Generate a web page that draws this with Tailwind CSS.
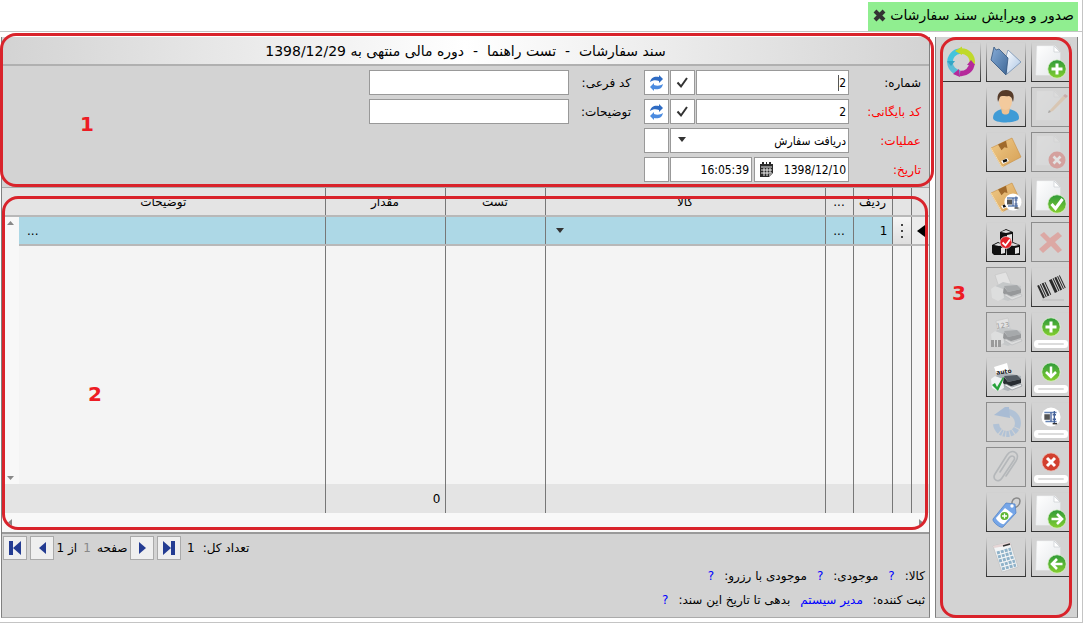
<!DOCTYPE html>
<html lang="fa" dir="rtl">
<head>
<meta charset="utf-8">
<title>صدور و ویرایش سند سفارشات</title>
<script src="https://cdn.jsdelivr.net/npm/@tailwindcss/browser@4"></script>
</head>
<body class="flex min-h-screen flex-col border-b border-l-0 border-r border-[#c4c4c4] bg-white text-xs text-black font-['DejaVu_Sans',sans-serif]">
<svg width="0" height="0" class="absolute size-0" aria-hidden="true">
  <defs>
    <linearGradient id="g-green" x1="0" y1="0" x2="0" y2="1"><stop offset="0" stop-color="#2f9a3a"/><stop offset="1" stop-color="#85cf2f"/></linearGradient>
    <linearGradient id="g-doc" x1="0" y1="0" x2="1" y2="1"><stop offset="0" stop-color="#fff"/><stop offset="1" stop-color="#e4e7ea"/></linearGradient>
    <linearGradient id="g-blue" x1="0" y1="0" x2="1" y2="1"><stop offset="0" stop-color="#86acd8"/><stop offset="1" stop-color="#3e6796"/></linearGradient>
    <linearGradient id="g-pale" x1="0" y1="0" x2="1" y2="1"><stop offset="0" stop-color="#fff"/><stop offset="1" stop-color="#a9c4e4"/></linearGradient>
    <linearGradient id="g-box" x1="0" y1="0" x2="1" y2="1"><stop offset="0" stop-color="#efc987"/><stop offset="1" stop-color="#d6a055"/></linearGradient>
    <symbol id="doc" viewBox="0 0 38 38"><path d="M5 3h18l5 6v23H4z" fill="url(#g-doc)" stroke="#eef0f2" stroke-width=".6"/><path d="M22 3v6h6z" fill="#fff" stroke="#c9cdd1" stroke-width=".7"/></symbol>
    <symbol id="dot" viewBox="0 0 18 18"><circle cx="9" cy="9" r="8.300" fill="url(#g-green)" stroke="#dff2cf" stroke-width=".7"/></symbol>
    <symbol id="bar" viewBox="0 0 38 38"><rect x="2" y="27" width="34" height="8" rx="3.500" fill="#fff"/><rect x="6" y="30" width="26" height="2" rx="1" fill="#dcdcdc"/></symbol>
    <symbol id="clamp" viewBox="0 0 18 18"><circle cx="9" cy="9" r="8.600" fill="#fff"/><path d="M3 5h11M4 13h10" stroke="#6482b4" stroke-width="1.300"/><path d="M3 6.500h5v5H3z" fill="#555"/><path d="M9 5v8M12 3.500v11M10.500 7h3M10.500 11h3" stroke="#45629a" stroke-width="1.200"/><path d="M10.500 15h4" stroke="#333" stroke-width="1.300"/></symbol>
    <symbol id="box" viewBox="0 0 38 38"><path d="M4 15 25 5l9 19-19 10z" fill="url(#g-box)" stroke="#c98e3f" stroke-width=".6"/><path d="m11 11.500 8-3.800 1.500 7.300-3-.8-3 3z" fill="#a06a2c"/><path d="M4 15 15 34l1.500-1" fill="none" stroke="#f8dca8"/><path d="m14 28 6-3 2 3-6 3z" fill="#fff"/><path d="m16 28.500 4-1.500" stroke="#111" stroke-width="2.500"/></symbol>
    <symbol id="printer" viewBox="0 0 38 38"><path d="M7 19 16 14l18 4v9l-13 6-13-4z" fill="#aeb4b9"/><path d="m4 21 4-3 8 3 1 9-6 3-6-3z" fill="#f1f3f4"/><path d="m17 18 13-1 4 4-13 3z" fill="#545c64"/><path d="m17 19 4 5 13-3v4l-13 4-5-4z" fill="#272c31"/><path d="m17 27 8 5 10-4-1-2-9 3-6-3z" fill="#eef0f1" stroke="#909599" stroke-width=".7"/></symbol>
  </defs>
</svg>

<header class="flex h-8 shrink-0 items-end border-b border-[#c4c4c4] pr-1">
  <div class="flex h-[29px] items-start gap-1 bg-[#90ee90] pt-[3px] pr-1 pl-[5px] text-[14px] leading-5">
    <span class="whitespace-nowrap">صدور و ویرایش سند سفارشات</span>
    <button type="button" aria-label="بستن" class="pt-1"><svg width="13" height="13" viewBox="0 0 13 13"><path d="m2 2 9 9M11 2l-9 9" stroke="#333" stroke-width="4"/></svg></button>
  </div>
</header>

<div class="flex flex-1 gap-[5px] pt-[5px] pr-1 pb-1 pl-px">
  <!-- Toolbar -->
  <aside class="relative w-[143px] shrink-0 border-x border-b border-x-[#808080] border-b-[#aaa] bg-[#d3d3d3]">
    <div class="grid grid-flow-col grid-cols-[repeat(3,40px)] grid-rows-[repeat(12,40px)] gap-[5px] pt-[5px] pr-[6px]
      [&>button]:border [&>button]:[border-image:linear-gradient(#d3d3d3,#333)_1] [&>button:disabled]:[border-image:linear-gradient(#8c8c8c,#8c8c8c)_1] [&>button:disabled>svg]:opacity-35">
      <button type="button" aria-label="سند جدید"><svg viewBox="0 0 38 38"><use href="#doc"/><use href="#dot" x="15" y="16" width="20" height="20"/><path d="M25 20.500v11M19.500 26h11" stroke="#fff" stroke-width="3"/></svg></button>
      <button type="button" disabled aria-label="ویرایش"><svg viewBox="0 0 38 38"><use href="#doc" opacity=".6"/><path d="m18 22 13-14 3 2-13 13-5 2z" fill="#e4b07a"/><path d="m31 8 2-2 3 2-2 2z" fill="#b7655f"/><path d="m16 25 1-3 2 2z" fill="#555"/></svg></button>
      <button type="button" disabled aria-label="انصراف"><svg viewBox="0 0 38 38"><use href="#doc" opacity=".6"/><circle cx="25" cy="27" r="8.500" fill="#d8473f"/><path d="m21.500 23.500 7 7m0-7-7 7" stroke="#fff" stroke-width="2.600"/></svg></button>
      <button type="button" aria-label="تایید"><svg viewBox="0 0 38 38"><use href="#doc"/><use href="#dot" x="15" y="16" width="20" height="20"/><path d="m19.500 26 4 4.500 7-9.500" fill="none" stroke="#fff" stroke-width="3"/></svg></button>
      <button type="button" disabled aria-label="حذف"><svg viewBox="0 0 38 38"><path d="m8 12 4-3 6 6 8-6 4 4-7 6 7 8-4 3-7-7-8 7-4-4 8-7z" fill="#ef5a4f"/></svg></button>
      <button type="button" aria-label="بارکد"><svg viewBox="0 0 38 38"><g transform="rotate(-25 19 19)" fill="#2a2a2a"><path d="M7 12h2v14H7zM10 12h1v14h-1zM12 12h2v14h-2zM15 12h1v14h-1zM20 12h3v14h-3zM24 12h1v14h-1zM26 12h2v14h-2zM29 12h1v14h-1zM31 12h1v14h-1z"/></g><path d="M10 32h22" stroke="#bbb"/></svg></button>
      <button type="button" aria-label="ردیف جدید"><svg viewBox="0 0 38 38"><use href="#bar"/><use href="#dot" x="9" y="4" width="20" height="20"/><path d="M19 8.500v11M13.500 14h11" stroke="#fff" stroke-width="3"/></svg></button>
      <button type="button" aria-label="درج ردیف"><svg viewBox="0 0 38 38"><use href="#bar"/><use href="#dot" x="9" y="4" width="20" height="20"/><path d="M19 8.500v10m-5-4.500 5 5 5-5" fill="none" stroke="#fff" stroke-width="2.500"/></svg></button>
      <button type="button" aria-label="فشرده سازی ردیف"><svg viewBox="0 0 38 38"><use href="#bar"/><use href="#clamp" x="9" y="4" width="20" height="20"/></svg></button>
      <button type="button" aria-label="حذف ردیف"><svg viewBox="0 0 38 38"><use href="#bar"/><circle cx="19" cy="14" r="9" fill="#d2402f" stroke="#efb3a9" stroke-width=".7"/><path d="m15 10 8 8m0-8-8 8" stroke="#fff" stroke-width="3"/></svg></button>
      <button type="button" aria-label="سند بعدی"><svg viewBox="0 0 38 38"><use href="#doc"/><use href="#dot" x="15" y="16" width="20" height="20"/><path d="M19.500 26H30m-5-5 5 5-5 5" fill="none" stroke="#fff" stroke-width="2.600"/></svg></button>
      <button type="button" aria-label="سند قبلی"><svg viewBox="0 0 38 38"><use href="#doc"/><use href="#dot" x="15" y="16" width="20" height="20"/><path d="M30.500 26H20m5-5-5 5 5 5" fill="none" stroke="#fff" stroke-width="2.600"/></svg></button>

      <button type="button" aria-label="باز کردن"><svg viewBox="0 0 38 38"><path d="m18 17 3-10 13 12-14 12z" fill="url(#g-pale)" stroke="#6888ae" stroke-width=".7"/><path d="m7 4 2 3 3-1 9 9-2 17L4 17z" fill="url(#g-blue)" stroke="#35567e" stroke-width=".8"/></svg></button>
      <button type="button" aria-label="کاربر"><svg viewBox="0 0 38 38"><path d="M6 30c0-6 5-8 9-9h7c5 1 10 3 10 9 0 6-26 6-26 0z" fill="#3f9bd6"/><path d="M14 20h9l-1 5c-2 2-5 2-7 0z" fill="#efc191"/><ellipse cx="18.500" cy="13.500" rx="6.500" ry="8.500" fill="#f3ca9d"/><path d="M11 14C9 5 14 2 19 2c7 0 9 5 7 12-1-3-1-5-4-6-4 1-7-1-9 1z" fill="#563b29"/></svg></button>
      <button type="button" aria-label="کالا"><svg viewBox="0 0 38 38"><use href="#box"/></svg></button>
      <button type="button" aria-label="کالا فشرده"><svg viewBox="0 0 38 38"><use href="#box"/><use href="#clamp" x="17" y="15" width="18" height="18"/></svg></button>
      <button type="button" aria-label="موجودی انبار"><svg viewBox="0 0 38 38"><path d="m13 9 6-3 7 3v14H13zM5 22l6-3 8 3v10H7l-2-2zM19 22l7-3 7 3v10H20z" fill="#111"/><path d="m14 9 5-2 5 2-5 1zM7 22l4-2 6 2-5 1zM21 22l5-2 6 2-5 1z" fill="#ddd"/><path d="m20 12 5-1v8l-5 1zM14 25l4-1v6l-4 1zM28 25l4-1v6l-4 1z" fill="#e5e5e5"/><circle cx="19" cy="19.500" r="6" fill="#e32228" stroke="#fff" stroke-width=".6"/><path d="m15.500 19.500 3 3 4.500-6" fill="none" stroke="#fff" stroke-width="1.800"/></svg></button>
      <button type="button" disabled aria-label="چاپ"><svg viewBox="0 0 38 38"><path d="m8 7 11-3 5 12-12 3z" fill="#fff" stroke="#aaa" stroke-width=".6"/><use href="#printer"/></svg></button>
      <button type="button" disabled aria-label="چاپ شماره"><svg viewBox="0 0 38 38"><path d="m9 8 12-3 2 11-12 3z" fill="#fff" stroke="#aaa" stroke-width=".6"/><use href="#printer"/><text x="9" y="15" font-size="7" transform="rotate(-8 15 12)" direction="ltr" fill="#333">123</text><path d="M4 27h3v7H4zM8 27h2v7H8zM11 27h3v7h-3z" fill="#333"/></svg></button>
      <button type="button" aria-label="چاپ خودکار"><svg viewBox="0 0 38 38"><path d="m7 9 13-4 3 12-12 3z" fill="#fff"/><use href="#printer"/><text x="9" y="16" font-size="6" font-weight="bold" transform="rotate(-8 15 12)" direction="ltr" fill="#222">auto</text><path d="m5 27 3-2 2 4 6-10 1 1-6 13z" fill="#27a33b"/></svg></button>
      <button type="button" disabled aria-label="بازگشت"><svg viewBox="0 0 38 38"><path d="M21 9a11 11 0 1 1-12 12" fill="none" stroke="#74a5dc" stroke-width="6" stroke-dasharray="21 1 4 1 3 1 3 1 2 1 2 1"/><path d="M7 12 18 4h4l1 11z" fill="#5c94d6"/></svg></button>
      <button type="button" disabled aria-label="پیوست"><svg viewBox="0 0 38 38"><path d="m13 24 9-14c3-4 7-1 5 2L15 30c-4 6-10 1-7-4L20 7c5-7 14-2 9 6L19 28" fill="none" stroke="#7d858c" stroke-width="1.600" stroke-linecap="round"/></svg></button>
      <button type="button" aria-label="برچسب"><svg viewBox="0 0 38 38"><path d="M25 12c-1-8 8-9 8-4s-4 7-7 6" fill="none" stroke="#888" stroke-width="1.500"/><path d="m6 26 13-16 9 1 1 9-13 14c-2 2-11-5-10-8z" fill="#76a6e8" stroke="#4d7fc4" stroke-width=".7"/><path d="m9 25 9-10 8 6-9 10c-2 1-8-4-8-6z" fill="#fff"/><circle cx="25" cy="13" r="1.700" fill="#fff"/><circle cx="17.500" cy="23" r="4" fill="#5cb531"/><path d="M17.500 20.500v5M15 23h5" stroke="#fff" stroke-width="1.300"/></svg></button>
      <button type="button" aria-label="ماشین حساب"><svg viewBox="0 0 38 38"><path d="m6 8 17-4 8 25-16 5z" fill="#f3f5f6" stroke="#bbb" stroke-width=".6"/><path d="m6 8 17-4 1 3L7 10z" fill="#e6d6d6"/><path d="m16 8 7-2" stroke="#333" stroke-width="1.500"/><g fill="none" stroke="#8fb2c9" stroke-width="3" stroke-dasharray="3 1"><path d="m10 15 14-4"/><path d="m11 19 14-4"/><path d="m12 23 15-4"/><path d="m14 27 14-4"/><path d="m15 31 14-4"/></g></svg></button>

      <button type="button" aria-label="بازخوانی"><svg viewBox="0 0 38 38" fill="none" stroke-width="5.500"><path d="M18.500 8A11 11 0 0 0 8 20" stroke="#43c3dd"/><path d="M8 19a11 11 0 0 0 10 11" stroke="#5cbcd6"/><path d="M18 30.500a11 11 0 0 0 12-10" stroke="#b5299b"/><path d="M30 21A11 11 0 0 0 18 8" stroke="#c0d92b"/><path d="M20 3.500l-7 4.500 7 4z" fill="#c0d92b" stroke="none"/><path d="M5 18h8l-4 5z" fill="#35a5c4" stroke="none"/><path d="m17 26-6 5 7 3zM25 22h8l-4-5z" fill="#b5299b" stroke="none"/></svg></button>
    </div>
    <div class="pointer-events-none absolute top-0 -bottom-px left-1 right-[5px] rounded-[16px] border-[3px] border-[#d9232b]"></div>
    <span class="absolute top-[242px] left-4 text-xl font-bold text-[#ed1c24]">3</span>
  </aside>

  <main class="flex min-w-0 flex-1 flex-col border-x border-b border-x-[#808080] border-b-[#aaa] bg-[#d3d3d3]">
    <!-- Document header -->
    <section class="relative h-[151px] border-b border-[#aaa]">
      <h1 class="h-[29px] border-b-2 border-[#b0b0b0] bg-linear-to-r from-[#d3d3d3] via-white to-[#d3d3d3] text-center text-[14px] leading-7 whitespace-pre">سند سفارشات  -  تست راهنما  -  دوره مالی منتهی به 1398/12/29</h1>
      <form class="flex pt-1 pr-2
        [&_input]:h-[25px] [&_input]:border [&_input]:border-[#999] [&_input]:bg-white [&_input]:px-[2px] [&_input]:text-right [&_input]:font-['DejaVu_Sans_Condensed'] [&_input]:[direction:ltr]
        [&_button]:flex [&_button]:size-[25px] [&_button]:items-center [&_button]:justify-center [&_button]:border [&_button]:border-[#999] [&_button]:bg-white">
        <div class="grid grid-cols-[71px_153px_25px_25px] content-start items-center gap-y-1 gap-x-px">
          <label for="num">شماره:</label>
          <div class="relative"><input id="num" value="2" class="w-full"><span class="absolute top-[5px] right-[10px] h-4 w-px bg-[#555]"></span></div>
          <button type="button" aria-label="تایید شماره"><svg width="15" height="15" viewBox="0 0 15 15"><path d="m2.500 7.500 3.500 4L12 3" fill="none" stroke="#333" stroke-width="2"/></svg></button>
          <button type="button" aria-label="تازه سازی شماره"><svg width="17" height="18" viewBox="0 0 17 18"><path d="M2 8c1-5 5-6 9-5V1l4 4-4 4V7C8 6 5 6 2 8z" fill="#2f6cc4"/><path d="M15 10c-1 5-5 6-9 5v2l-4-4 4-4v2c3 1 6 1 9-1z" fill="#4b8be0"/></svg></button>
          <label for="arc" class="whitespace-nowrap text-[#ff0000]">کد بایگانی:</label>
          <input id="arc" value="2" class="w-full">
          <button type="button" aria-label="تایید کد"><svg width="15" height="15" viewBox="0 0 15 15"><path d="m2.500 7.500 3.500 4L12 3" fill="none" stroke="#333" stroke-width="2"/></svg></button>
          <button type="button" aria-label="تازه سازی کد"><svg width="17" height="18" viewBox="0 0 17 18"><path d="M2 8c1-5 5-6 9-5V1l4 4-4 4V7C8 6 5 6 2 8z" fill="#2f6cc4"/><path d="M15 10c-1 5-5 6-9 5v2l-4-4 4-4v2c3 1 6 1 9-1z" fill="#4b8be0"/></svg></button>
          <label for="op" class="text-[#ff0000]">عملیات:</label>
          <div class="relative col-span-2">
            <select id="op" class="block h-[25px] w-full appearance-none border border-[#999] bg-white px-[2px] font-['DejaVu_Sans_Condensed']"><option>دریافت سفارش</option></select>
            <svg class="pointer-events-none absolute top-[9px] left-2" width="8" height="5" viewBox="0 0 8 5"><path d="M0 0h8L4 5z" fill="#333"/></svg>
          </div>
          <button type="button" aria-label="عملیات"></button>
          <label for="date" class="text-[#ff0000]">تاریخ:</label>
          <div class="col-span-2 flex gap-[2px]">
            <div class="flex h-[25px] w-[95px] items-center border border-[#999] bg-white">
              <input id="date" value="1398/12/10" class="w-[74px] border-0! h-[23px]!">
              <svg width="15" height="16" viewBox="0 0 15 16"><path d="M1 2h13v9l-4 4H1z" fill="#2b2b2b"/><path d="M3 0h2v3H3zM7 0h1v3H7zM10 0h2v3h-2z" fill="#2b2b2b"/><path d="M2 5h11M5 6v8M8 6v8M11 6v5M2 8h11M2 11h11" stroke="#fff" stroke-width=".9"/><path d="m10 15 4-4h-4z" fill="#999"/></svg>
            </div>
            <input aria-label="ساعت" value="16:05:39" class="min-w-0 flex-1">
          </div>
          <button type="button" aria-label="تاریخ"></button>
        </div>
        <div class="mr-[13px] grid grid-cols-[62px_200px] content-start items-center gap-y-1">
          <label for="sub">کد فرعی:</label><input id="sub" class="w-full">
          <label for="desc">توضیحات:</label><input id="desc" class="w-full">
        </div>
      </form>
      <div class="pointer-events-none absolute -top-1 -right-[5px] bottom-0 -left-[2px] rounded-[16px] border-[3px] border-[#d9232b]"></div>
      <span class="absolute top-[73px] left-[78px] text-xl font-bold text-[#ed1c24]">1</span>
    </section>

    <!-- Lines grid -->
    <section class="relative border-b-2 border-[#999] bg-[#f8f8f8]">
      <table class="w-full table-fixed border-collapse bg-[#f4f4f4] [&_td]:p-0 [&_th]:p-0 [&_th]:font-normal">
        <colgroup><col class="w-[18px]"><col class="w-[19px]"><col class="w-[39px]"><col class="w-[28px]"><col class="w-[280px]"><col class="w-[100px]"><col class="w-[120px]"><col><col class="w-[17px]"></colgroup>
        <thead>
          <tr class="h-7 border-b-2 border-[#b8b8b8] bg-[#e4e4e4] leading-6 [&>th]:border-l [&>th]:border-l-[#777] [&>th:last-child]:border-l-0">
            <th></th><th></th><th>ردیف</th><th>...</th><th>کالا</th><th>تست</th><th>مقدار</th><th colspan="2">توضیحات</th>
          </tr>
        </thead>
        <tbody>
          <tr class="h-[29px] border-b-2 border-[#b8b8b8] bg-[#add8e6] [&>td]:border-l [&>td]:border-l-[#777] [&>td:nth-last-child(-n+2)]:border-l-0">
            <td class="bg-[#ececec]"><svg class="mr-1" width="9" height="12" viewBox="0 0 9 12"><path d="M9 0v12L1 6z"/></svg></td>
            <td class="bg-linear-to-b from-[#f5f5f5] to-[#dedede] text-center"><button type="button" aria-label="منوی ردیف" class="align-middle"><svg width="4" height="14" viewBox="0 0 4 14"><path d="M1 0h2v2H1zM1 6h2v2H1zM1 12h2v2H1z" fill="#444"/></svg></button></td>
            <td class="pr-1!">1</td>
            <td class="text-center">...</td>
            <td><svg class="mr-auto ml-[10px]" width="8" height="5" viewBox="0 0 8 5"><path d="M0 0h8L4 5z" fill="#333"/></svg></td>
            <td></td><td></td>
            <td class="pl-2! text-left">...</td>
            <td rowspan="2" class="border-b-0 bg-[#f8f8f8]">
              <div class="flex h-[267px] flex-col items-center justify-between py-1">
                <svg width="7" height="4" viewBox="0 0 7 4"><path d="M0 4h7L3.500 0z" fill="#888"/></svg>
                <svg width="7" height="4" viewBox="0 0 7 4"><path d="M0 0h7L3.500 4z" fill="#888"/></svg>
              </div>
            </td>
          </tr>
          <tr class="[&>td]:border-l [&>td]:border-l-[#777] [&>td:last-child]:border-l-0">
            <td></td><td></td><td></td><td></td><td></td><td></td><td></td><td></td>
          </tr>
        </tbody>
        <tfoot>
          <tr class="h-[29px] bg-[#e4e4e4] [&>td]:border-l [&>td]:border-l-[#777] [&>td:last-child]:border-l-0">
            <td></td><td></td><td></td><td></td><td></td><td></td><td class="pr-1!">0</td><td colspan="2"></td>
          </tr>
        </tfoot>
      </table>
      <div class="flex h-[19px] items-center justify-between px-[6px]">
        <svg width="4" height="7" viewBox="0 0 4 7"><path d="M0 0v7l4-3.500z" fill="#888"/></svg>
        <svg width="4" height="7" viewBox="0 0 4 7"><path d="M4 0v7L0 3.500z" fill="#888"/></svg>
      </div>
      <div class="pointer-events-none absolute top-2 right-px bottom-[2px] left-0 rounded-[16px] border-[3px] border-[#d9232b]"></div>
      <span class="absolute top-[192px] left-[86px] text-xl font-bold text-[#ed1c24]">2</span>
    </section>

    <!-- Pager and status -->
    <footer class="pt-[2px]">
      <nav dir="ltr" class="flex items-center pl-px [&_button]:flex [&_button]:size-6 [&_button]:items-center [&_button]:justify-center [&_button]:border [&_button]:border-[#aaa] [&_button]:bg-[#efefef]">
        <div class="flex gap-[3px]">
          <button type="button" aria-label="اولین صفحه"><svg width="12" height="14" viewBox="0 0 12 14"><path d="M0 0h4v14H0zM12 0v14L4 7z" fill="#243c92"/></svg></button>
          <button type="button" aria-label="صفحه پیش"><svg width="7" height="12" viewBox="0 0 7 12"><path d="M7 0v12L0 6z" fill="#243c92"/></svg></button>
        </div>
        <div dir="rtl" class="flex w-[76px] items-center justify-center gap-[2px] whitespace-nowrap"><label for="page">صفحه</label><input id="page" value="1" class="w-4 text-center text-[#888]"><span>از 1</span></div>
        <div class="flex gap-[3px]">
          <button type="button" aria-label="صفحه بعد"><svg width="7" height="12" viewBox="0 0 7 12"><path d="M0 0v12l7-6z" fill="#243c92"/></svg></button>
          <button type="button" aria-label="آخرین صفحه"><svg width="12" height="14" viewBox="0 0 12 14"><path d="M8 0h4v14H8zM0 0v14l8-7z" fill="#243c92"/></svg></button>
        </div>
        <p dir="rtl" class="ml-[6px] flex gap-2"><span>تعداد کل:</span><span>1</span></p>
      </nav>
      <div class="flex flex-col gap-2 pt-2 pr-1 [&_b]:font-normal [&_b]:text-[#0000ff]">
        <p class="flex gap-[10px] leading-4"><span>کالا:</span><b dir="ltr">?</b><span>موجودی:</span><b dir="ltr">?</b><span>موجودی با رزرو:</span><b dir="ltr">?</b></p>
        <p class="flex gap-[10px] leading-4"><span>ثبت کننده:</span><b>مدیر سیستم</b><span>بدهی تا تاریخ این سند:</span><b dir="ltr">?</b></p>
      </div>
    </footer>
  </main>
</div>
</body>
</html>
